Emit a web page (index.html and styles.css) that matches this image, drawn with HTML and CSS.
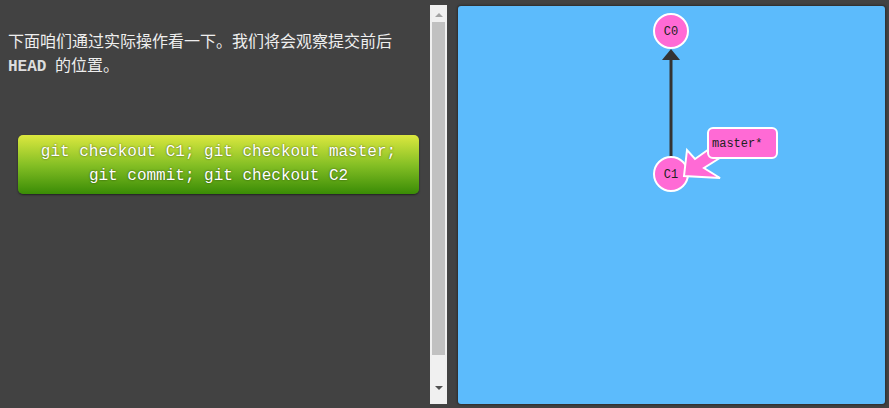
FILE: index.html
```html
<!DOCTYPE html>
<html>
<head>
<meta charset="utf-8">
<link rel="stylesheet" href="styles.css">
</head>
<body>
<div class="page">
  <div class="left">
    <p class="intro">下面咱们通过实际操作看一下。我们将会观察提交前后 <code>HEAD</code> 的位置。</p>
    <div class="cmd">
      <div>git checkout C1; git checkout master;</div>
      <div>git commit; git checkout C2</div>
    </div>
  </div>
  <div class="scrollbar">
    <div class="arrow-up"></div>
    <div class="thumb"></div>
    <div class="track-rest"></div>
    <div class="arrow-down"></div>
  </div>
  <div class="canvas">
    <svg class="graph" width="427" height="398" viewBox="0 0 427 398">
      <line x1="213" y1="151" x2="213" y2="52" stroke="#333" stroke-width="3"/>
      <polygon points="213,43 204,54 222,54" fill="#333"/>
      <circle cx="213" cy="25" r="17" fill="#ff6ad5" stroke="#fff" stroke-width="2"/>
      <text x="213" y="29" class="node-text">C0</text>
      <circle cx="213" cy="168" r="17" fill="#ff6ad5" stroke="#fff" stroke-width="2"/>
      <text x="213" y="172" class="node-text">C1</text>
      <polygon points="226,170 229,144 237,153 254,141 265,150 246,162 262,172" fill="#ff6ad5" stroke="#fff" stroke-width="2" stroke-linejoin="miter"/>
      <rect x="250" y="122" width="69" height="30" rx="5" fill="#ff6ad5" stroke="#fff" stroke-width="2"/>
      <text x="254" y="141" class="branch-text">master*</text>
    </svg>
  </div>
</div>
</body>
</html>
```
FILE: styles.css
```css
html, body {
  margin: 0;
  padding: 0;
  background: #424242;
  height: 100%;
  overflow: hidden;
}
.page {
  display: flex;
  align-items: flex-start;
  height: 408px;
}
.left {
  width: 430px;
  flex: none;
}
.intro {
  margin: 28px 0 0 8px;
  padding-right: 10px;
  color: #eee;
  font-family: "Noto Sans CJK SC", "Liberation Sans", sans-serif;
  font-size: 16px;
  line-height: 24px;
}
.intro code {
  font-family: "Liberation Mono", monospace;
  font-weight: bold;
  font-size: 16px;
  color: #ddd;
  margin-right: 5px;
}
.cmd {
  margin: 56px 0 0 18px;
  width: 401px;
  height: 59px;
  box-sizing: border-box;
  padding-top: 5px;
  border-radius: 5px;
  background: linear-gradient(to bottom, #dce83f 0%, #86c025 50%, #3a8c06 100%);
  box-shadow: 0 1px 2px rgba(0,0,0,0.5);
  color: #fff;
  font-family: "Liberation Mono", monospace;
  font-size: 16px;
  line-height: 24px;
  text-align: center;
  text-shadow: 0 0 2px rgba(0,0,0,0.6);
}
.scrollbar {
  margin-top: 5px;
  width: 17px;
  height: 399px;
  flex: none;
  background: #f0f0f0;
  display: flex;
  flex-direction: column;
  align-items: center;
}
.arrow-up {
  margin-top: 8px;
  width: 0;
  height: 0;
  border-left: 4px solid transparent;
  border-right: 4px solid transparent;
  border-bottom: 4px solid #a3a3a3;
}
.thumb {
  margin-top: 5px;
  width: 13px;
  height: 333px;
  background: #c1c1c1;
}
.track-rest {
  flex: 1;
}
.arrow-down {
  margin-bottom: 14px;
  width: 0;
  height: 0;
  border-left: 4px solid transparent;
  border-right: 4px solid transparent;
  border-top: 4px solid #505050;
}
.canvas {
  margin: 6px 0 0 11px;
  width: 427px;
  height: 398px;
  flex: none;
  position: relative;
  background: #5cbbfc;
  border-radius: 3px;
  box-shadow: 0 0 2px 1px #2e2e2e;
}
.graph {
  position: absolute;
  left: 0;
  top: 0;
}
.node-text {
  font-family: "Liberation Mono", monospace;
  font-size: 12px;
  fill: #222;
  text-anchor: middle;
}
.branch-text {
  font-family: "Liberation Mono", monospace;
  font-size: 12px;
  fill: #222;
}
```
